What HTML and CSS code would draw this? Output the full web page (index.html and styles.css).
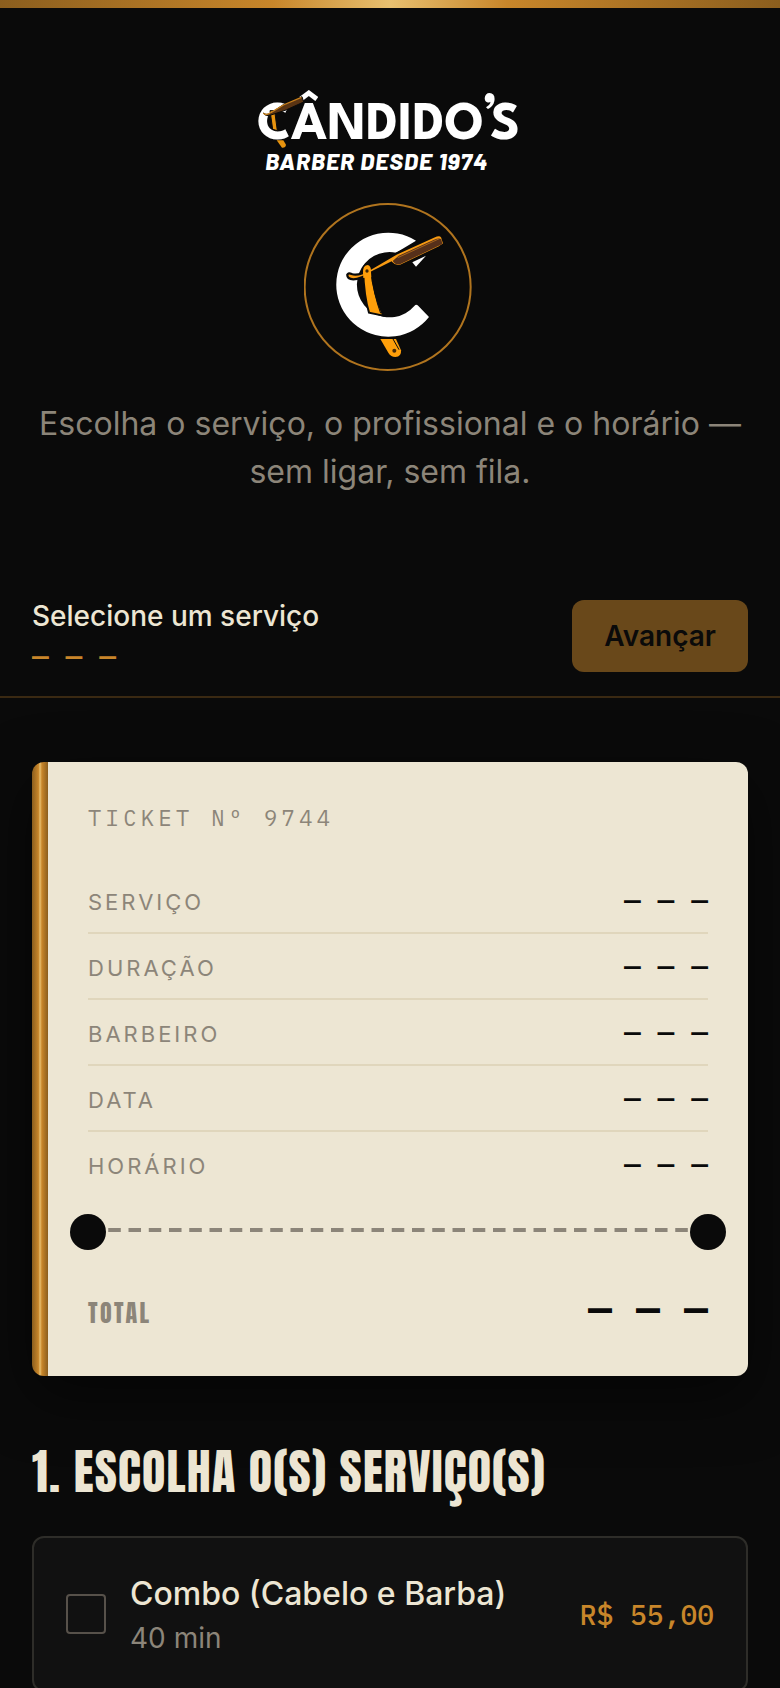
FILE: index.html
```html
<!DOCTYPE html>
<html lang="pt-BR">
<head>
<meta charset="utf-8">
<meta name="viewport" content="width=device-width, initial-scale=1">
<title>Cândido's Barber</title>
<link rel="stylesheet" href="styles.css">
</head>
<body>
<header class="hero">
  <svg class="wordmark" viewBox="42 24 816 270" role="img" aria-label="Cândido's Barber desde 1974">
    <text class="wordmark-name" x="51" y="177">CÂNDIDO<tspan dy="-26">’</tspan><tspan dx="-20" dy="26">S</tspan></text>
    <text class="wordmark-tag" x="76" y="271">BARBER DESDE 1974</text>
    <path d="M90 92 L104 92 L112 152 L98 148Z" fill="#e8940f" stroke="#0a0a0a" stroke-width="3"/>
    <path d="M70 99 Q80 108 94 98 L130 74 L186 50 L191 66 L138 90 L96 104 Q78 112 70 99Z" fill="#5a3413" stroke="#0a0a0a" stroke-width="3"/>
    <path d="M70 100 Q80 108 94 97 L130 75 L184 52" fill="none" stroke="#c8801c" stroke-width="4"/>
    <path d="M110 181 L130 181 L138 194 Q137 204 126 203Z" fill="#e8940f"/>
  </svg>
  <svg class="mark" viewBox="42 36 516 516" aria-hidden="true">
    <circle cx="293" cy="291" r="249" fill="none" stroke="#b0741e" stroke-width="6"/>
    <path d="M378 152 A156 156 0 1 0 417 381 L383 346 Q378 342 373 348 A98 98 0 1 1 318 188Z" fill="#fff"/>
    <path d="M367 217 L408 197 L378 230Z" fill="#fff"/>
    <path d="M219 236 Q222 224 232 224 Q243 226 243 238 Q250 310 280 377 L237 368 Q222 320 219 236Z" fill="#ff9f0a" stroke="#0a0a0a" stroke-width="6"/>
    <path d="M245 250 Q252 316 272 370" fill="none" stroke="#0a0a0a" stroke-width="3"/>
    <path d="M172 254 Q175 247 185 252 Q205 260 240 237 L318 191 L432 139 Q452 130 457 142 L463 162 L448 172 L330 228 Q315 231 304 218 L249 245 Q210 268 190 268 Q171 267 172 254Z" fill="#f79a12" stroke="#0a0a0a" stroke-width="7"/>
    <path d="M308 213 L326 197 L432 149 Q448 142 454 148 L457 162 L330 223 Q317 226 308 213Z" fill="#56301a"/>
    <path d="M323 203 L448 146" fill="none" stroke="#a5641e" stroke-width="3"/>
    <path d="M219 250 Q218 226 232 225 Q244 226 243 246 L244 262 L220 264Z" fill="#ff9f0a"/>
    <circle cx="231" cy="243" r="5" fill="#3a2408"/>
    <path d="M271 447 L318 447 L333 481 Q335 500 316 501 Q303 501 295 488Z" fill="#ff9f0a"/>
    <path d="M309 447 L327 479" stroke="#0a0a0a" stroke-width="3"/>
    <circle cx="313" cy="482" r="6" fill="#4a2c08"/>
  </svg>
  <p class="tagline">Escolha o serviço, o profissional e o horário — sem ligar, sem fila.</p>
</header>

<section class="action-bar" aria-label="Resumo">
  <div class="summary">
    <span class="summary-title">Selecione um serviço</span>
    <span class="summary-price">— — —</span>
  </div>
  <button class="next" type="button">Avançar</button>
</section>

<main class="content">
  <section class="ticket" aria-label="Ticket">
    <p class="ticket-number">TICKET Nº 9744</p>
    <dl class="rows">
      <div class="row"><dt>SERVIÇO</dt><dd>— — —</dd></div>
      <div class="row"><dt>DURAÇÃO</dt><dd>— — —</dd></div>
      <div class="row"><dt>BARBEIRO</dt><dd>— — —</dd></div>
      <div class="row"><dt>DATA</dt><dd>— — —</dd></div>
      <div class="row"><dt>HORÁRIO</dt><dd>— — —</dd></div>
    </dl>
    <div class="perforation"></div>
    <div class="total"><span class="total-label">TOTAL</span><span class="total-value">— — —</span></div>
  </section>

  <section class="services">
    <h2 class="step-title">1. ESCOLHA O(S) SERVIÇO(S)</h2>
    <label class="service" for="combo">
      <input class="service-check" type="checkbox" id="combo">
      <span class="service-info">
        <span class="service-name">Combo (Cabelo e Barba)</span>
        <span class="service-time">40 min</span>
      </span>
      <span class="service-price">R$ 55,00</span>
    </label>
  </section>
</main>
</body>
</html>
```
FILE: styles.css
```css
:root {
  --ink: #0a0a0a;
  --cream: #ede6d3;
  --muted: #8c8579;
  --brass: #c8862a;
  --brass-dark: #8b5e1e;
  --brass-light: #e8c070;
  --mono: "IBM Plex Mono", "Liberation Mono", monospace;
  --display: "Anton", "Liberation Sans", sans-serif;
}

* { box-sizing: border-box; }

body {
  margin: 0;
  background: var(--ink);
  color: var(--cream);
  font-family: "Inter", sans-serif;
  font-size: 28px;
}

body::before {
  content: "";
  display: block;
  height: 8px;
  background: linear-gradient(90deg, var(--brass-dark), var(--brass) 35%, var(--brass-light) 50%, var(--brass) 65%, var(--brass-dark));
}

.hero {
  display: flex;
  flex-direction: column;
  align-items: center;
  padding: 80px 32px;
}

.wordmark { width: 272px; height: 90px; }
.wordmark text { fill: #fff; }
.wordmark-name { font: 700 160px "League Spartan", "Lato", sans-serif; }
.wordmark-tag { font: italic 800 70px "Barlow", "Roboto", sans-serif; letter-spacing: 3px; }
.mark { width: 172px; height: 172px; margin-top: 24px; }

.tagline {
  margin: 26px 0 0;
  color: var(--muted);
  font-size: 32px;
  line-height: 48px;
  text-align: center;
}

.action-bar {
  display: flex;
  align-items: center;
  justify-content: space-between;
  padding: 24px 32px;
  border-bottom: 2px solid #3a2912;
}

.summary { display: flex; flex-direction: column; gap: 8px; }
.summary-title { font-weight: 500; line-height: 32px; }
.summary-price { color: var(--brass); font-family: var(--mono); font-weight: 500; line-height: 32px; }

.next {
  height: 72px;
  padding: 0 32px;
  border: 0;
  border-radius: 12px;
  background: #69481a;
  color: var(--ink);
  font: 600 28px "Inter", sans-serif;
}

.content { padding: 64px 32px 0; }

.ticket {
  position: relative;
  padding: 40px 40px 40px 56px;
  border-radius: 12px;
  background: linear-gradient(90deg, var(--brass-dark), var(--brass) 40%, var(--brass-light) 50%, var(--brass) 62%, var(--brass-dark)) 0 0 / 16px 100% no-repeat var(--cream);
  box-shadow: 0 20px 60px rgba(0, 0, 0, 0.5);
  color: var(--ink);
}

.ticket-number {
  margin: 0 0 34px;
  color: var(--muted);
  font-family: var(--mono);
  font-size: 22px;
  line-height: 32px;
  letter-spacing: 0.2em;
}

.rows { margin: 0; }

.row {
  display: flex;
  align-items: baseline;
  justify-content: space-between;
  padding: 14px 0 12px;
  border-bottom: 2px solid #e0d6bc;
  line-height: 36px;
}
.row:last-child { border-bottom-color: transparent; }
.row dt { color: var(--muted); font-size: 22px; letter-spacing: 3px; }
.row dd { margin: 0; font-family: var(--mono); font-weight: 500; }

.perforation {
  position: relative;
  height: 4px;
  margin: 30px -8px 48px 0;
  background: linear-gradient(90deg, var(--muted) 60%, transparent 60%) 0 0 / 20px 4px round;
}
.perforation::before,
.perforation::after {
  content: "";
  position: absolute;
  top: -14px;
  width: 36px;
  height: 36px;
  border-radius: 50%;
  background: var(--ink);
}
.perforation::before { left: -18px; }
.perforation::after { right: -10px; }

.total {
  display: flex;
  align-items: baseline;
  justify-content: space-between;
}
.total-label { color: var(--muted); font: 400 24px/32px var(--display); letter-spacing: 0.1em; }
.total-value { font: 700 40px/56px var(--mono); }

.services { padding-top: 64px; }

.step-title {
  margin: 0 0 32px;
  font: 400 48px/64px var(--display);
  letter-spacing: 0.025em;
}

.service {
  display: flex;
  align-items: center;
  gap: 24px;
  padding: 32px;
  min-height: 156px;
  border: 2px solid #2e2d29;
  border-radius: 12px;
  background: #111;
}

.service-check {
  appearance: none;
  flex: none;
  width: 40px;
  height: 40px;
  margin: 0;
  border: 2px solid #57514a;
  border-radius: 4px;
}
.service-check:checked { background: var(--brass); }

.service-info { display: flex; flex: 1; flex-direction: column; }
.service-name { font-size: 32px; font-weight: 500; line-height: 48px; }
.service-time { color: var(--muted); line-height: 40px; }
.service-price { color: var(--brass); font-family: var(--mono); font-weight: 500; }
```
